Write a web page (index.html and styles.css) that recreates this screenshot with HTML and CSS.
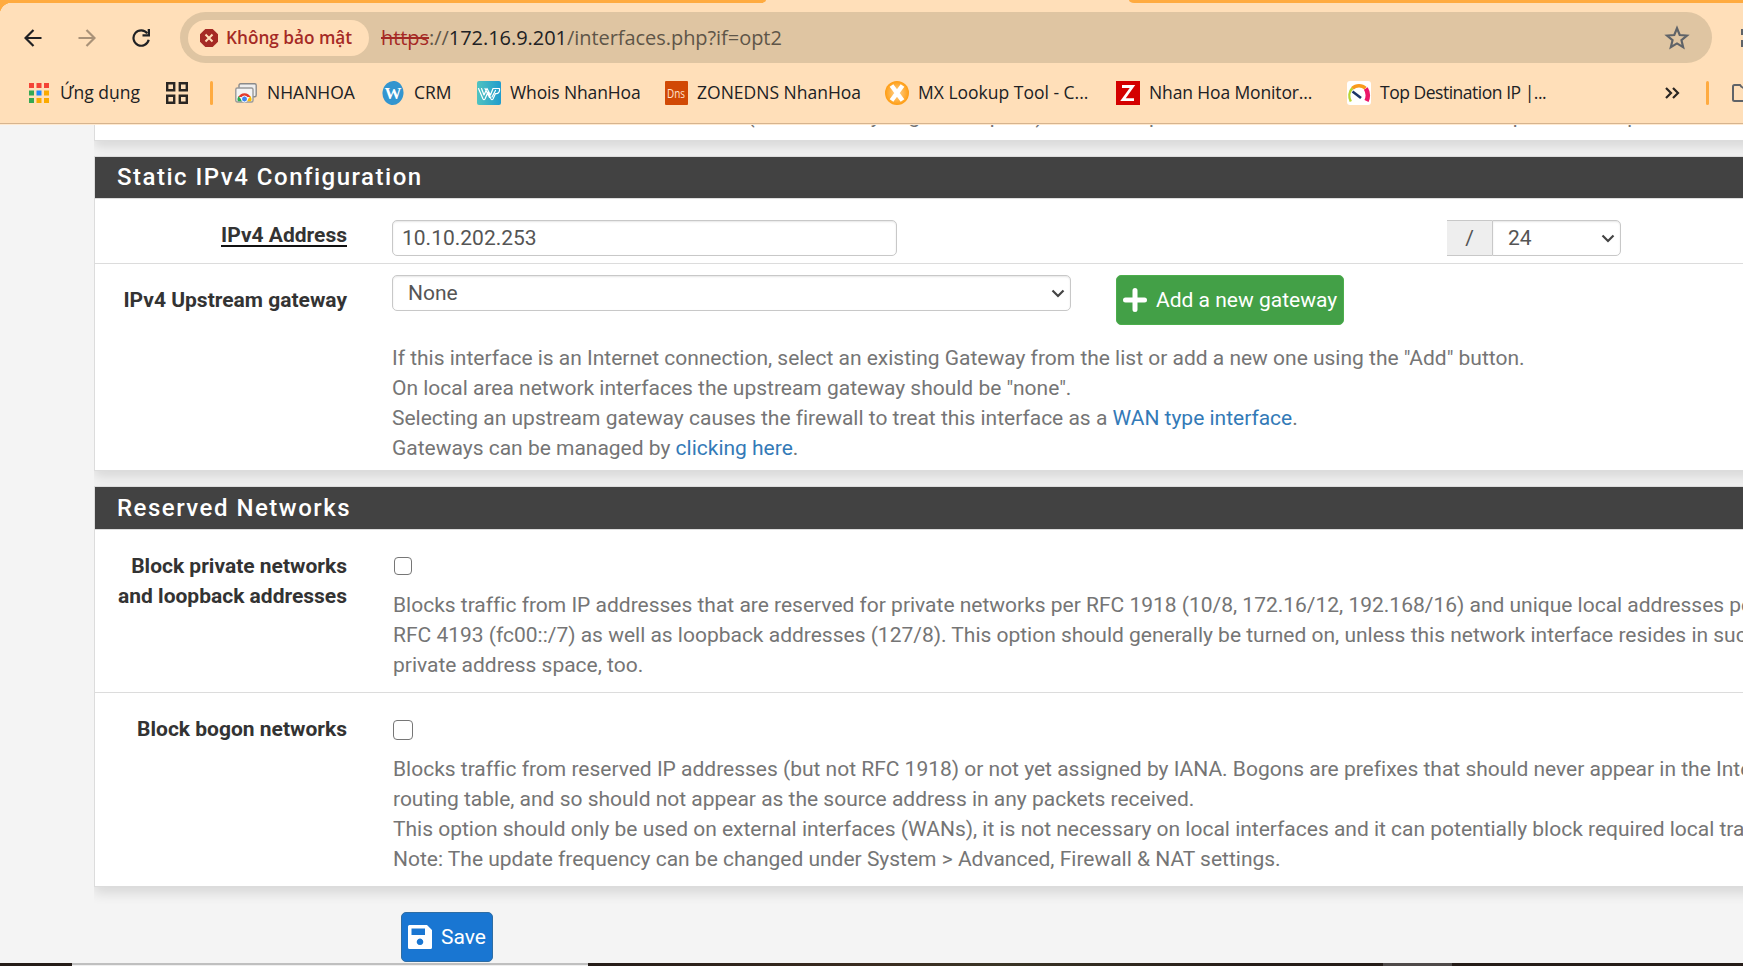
FILE: index.html
```html
<!DOCTYPE html>
<html lang="vi">
<head>
<meta charset="utf-8">
<title>Interfaces</title>
<link rel="stylesheet" href="styles.css">
</head>
<body>
<div class="window">
  <header class="chrome">
    <div class="tabstrip"><span class="tab-bg left"></span><span class="tab-bg right"></span></div>
    <div class="toolbar">
      <svg class="nav back" viewBox="0 0 18 18"><path d="M17.500 9H2M9.500 1L1.500 9l8 8"/></svg>
      <svg class="nav forward" viewBox="0 0 18 18"><path d="M.5 9H16M8.500 1l8 8-8 8"/></svg>
      <svg class="nav reload" viewBox="0 0 18 18"><path d="M15.300 4.300A7.700 7.700 0 1 0 16.700 10.800"/><path class="fill" d="M18 0v7.500h-7.500V5.300h5.200V0z"/></svg>
      <div class="omnibox">
        <div class="chip">
          <svg width="18" height="18" viewBox="0 0 18 18"><path fill="#a52a25" d="M5.300 0h7.400L18 5.300v7.400L12.700 18H5.300L0 12.700V5.300z"/><path stroke="#ffdfb9" stroke-width="2" d="M5.500 5.500l7 7M12.500 5.500l-7 7"/></svg>
          <span class="chip-text">Không bảo mật</span>
        </div>
        <div class="url"><span class="scheme">https</span><span class="slashes">://</span><span class="host">172.16.9.201</span><span class="path">/interfaces.php?if=opt2</span></div>
        <svg class="star" viewBox="0 0 24 24"><path d="M12 3l2.500 6.200 6.700.5-5.100 4.300 1.600 6.500-5.700-3.500-5.700 3.500 1.600-6.500-5.100-4.300 6.700-.5z"/></svg>
      </div>
      <svg class="ext" width="3" height="20" viewBox="0 0 3 20"><path fill="#5f6368" d="M1 1h2v6H1zM1 12h2v7H1z"/></svg>
    </div>
    <nav class="bookmarks">
      <a class="bm apps"><svg width="20" height="20" viewBox="0 0 20 20"><path fill="#f44336" d="M0 0h5v5H0zM7.500 0h5v5h-5zM15 0h5v5h-5z"/><path fill="#34a853" d="M0 7.500h5v5H0zM0 15h5v5H0z"/><path fill="#1e88ff" d="M7.500 7.500h5v5h-5z"/><path fill="#fbaa00" d="M15 7.500h5v5h-5zM7.500 15h5v5h-5zM15 15h5v5h-5z"/></svg><span>Ứng dụng</span></a>
      <svg class="grid-icon" width="22" height="22" viewBox="0 0 22 22"><path fill="none" stroke="#2a2623" stroke-width="2.400" d="M1.200 1.200h7v7h-7zM13.800 1.200h7v7h-7zM1.200 13.800h7v7h-7zM13.800 13.800h7v7h-7z"/></svg>
      <i class="sep"></i>
      <a class="bm nhanhoa"><svg width="22" height="20" viewBox="0 0 22 20"><rect x="4" y=".8" width="17.200" height="13" rx="1.500" fill="#eee" stroke="#8a8a8a" stroke-width="1.400"/><rect x=".8" y="5" width="17.200" height="14" rx="1.500" fill="#f4f4f4" stroke="#999" stroke-width="1.400"/><path fill="#e33b2e" d="M3.400 14A6.800 6.800 0 0 1 15.600 14z"/><path fill="#2da94f" d="M3.400 13a6.800 6.800 0 0 0-.6 5.300h5z"/><path fill="#fdbd00" d="M15.600 13a6.800 6.800 0 0 1 .6 5.300h-5z"/><circle cx="9.500" cy="16" r="3" fill="#3e82f1" stroke="#fff"/></svg><span>NHANHOA</span></a>
      <a class="bm crm"><svg width="22" height="24" viewBox="0 0 22 24"><ellipse cx="11" cy="12" rx="10.500" ry="12" transform="rotate(8 11 12)" fill="#3395cf"/><text x="11" y="18" class="ico-w">W</text></svg><span>CRM</span></a>
      <a class="bm whois"><svg width="24" height="24" viewBox="0 0 24 24"><defs><linearGradient id="wg"><stop offset="0" stop-color="#50c3c0"/><stop offset="1" stop-color="#219ccd"/></linearGradient></defs><rect width="24" height="24" rx="2" fill="url(#wg)"/><path fill="none" stroke="#fff" stroke-width="1.200" stroke-linejoin="round" stroke-linecap="round" d="M1.500 7.500l4.500 10.500q1 1.500 2 0L11 11l3 7q1 1.500 2 0l2.500-5.500c3 .5 4.500-2 4-5h-6.500L13.500 14 10 7.500 7 14 4.500 7.500M8 7.500l4.500 9M18.500 9.500l-3.500 6.500"/></svg><span>Whois NhanHoa</span></a>
      <a class="bm dns"><svg width="23" height="24" viewBox="0 0 23 24"><rect width="23" height="24" rx="1" fill="#d14905"/><text x="2" y="16.500" class="ico-dns" textLength="18" lengthAdjust="spacingAndGlyphs">Dns</text></svg><span>ZONEDNS NhanHoa</span></a>
      <a class="bm mx"><svg width="24" height="24" viewBox="0 0 24 24"><defs><radialGradient id="mg"><stop offset="0" stop-color="#ffd596"/><stop offset="1" stop-color="#ff9d12"/></radialGradient></defs><circle cx="12" cy="12" r="12" fill="url(#mg)"/><path stroke="#fff" stroke-width="4.600" d="M6.500 4.500l11 15M17.500 4.500l-11 15"/></svg><span>MX Lookup Tool - C...</span></a>
      <a class="bm zbx"><svg width="24" height="24" viewBox="0 0 24 24"><rect width="24" height="24" fill="#d40000"/><path fill="none" stroke="#fff" stroke-width="2.800" d="M6 5.500h10.500L7 18.700h11"/></svg><span>Nhan Hoa Monitor...</span></a>
      <a class="bm top"><svg width="24" height="24" viewBox="0 0 24 24"><rect width="24" height="24" rx="3" fill="#fff"/><g fill="none"><path stroke="#b7d433" stroke-width="2.500" d="M3.800 20.500C1.500 16 2 10.500 5.500 7"/><path stroke="#f99b1c" stroke-width="3.500" d="M5.500 7.200C9 3.800 15 3.800 18.500 7.200"/><path stroke="#ec1668" stroke-width="4.500" d="M18.800 7.500c2.200 3.500 2.500 8.500.7 12.500"/><path stroke="#1c3668" stroke-width="2.600" d="M5.500 10.500l8.500 6.500"/></g></svg><span>Top Destination IP |...</span></a>
      <svg class="more" width="15" height="12" viewBox="0 0 15 12"><path fill="none" stroke="#2a2623" stroke-width="2.200" d="M1 1l5 5-5 5M8 1l5 5-5 5"/></svg>
      <i class="sep"></i>
      <svg class="folder" width="20" height="18" viewBox="0 0 20 18"><path fill="none" stroke="#5f6368" stroke-width="2" d="M10 3.500L8 1H2.500Q1 1 1 2.500v13Q1 17 2.500 17H20M10 3.500h10"/></svg>
    </nav>
  </header>

  <main class="page">
    <section class="panel first">
      <div class="row clipped"><p class="help">WARNING: MUST be set to autoselect (automatically negotiate speed) unless the port this interface connects to has its speed and duplex forced.</p></div>
    </section>

    <section class="panel">
      <h2>Static IPv4 Configuration</h2>
      <div class="row address">
        <div class="label"><span class="required">IPv4 Address</span></div>
        <div class="field">
          <div class="control ip">10.10.202.253</div>
          <div class="group"><span class="addon">/</span><div class="control mask"><span>24</span><svg class="caret" viewBox="0 0 14 9"><path d="M1.500 1.500L7 7l5.500-5.500"/></svg></div></div>
        </div>
      </div>
      <div class="row gateway">
        <div class="label">IPv4 Upstream gateway</div>
        <div class="field">
          <div class="controls">
            <div class="control gw"><span>None</span><svg class="caret" viewBox="0 0 14 9"><path d="M1.500 1.500L7 7l5.500-5.500"/></svg></div>
            <div class="btn add"><svg width="24" height="24" viewBox="0 0 24 24"><path stroke="#fff" stroke-width="5" stroke-linecap="round" d="M12 2.500v19M2.500 12h19"/></svg><span>Add a new gateway</span></div>
          </div>
          <p class="help">If this interface is an Internet connection, select an existing Gateway from the list or add a new one using the "Add" button.<br>On local area network interfaces the upstream gateway should be "none".<br>Selecting an upstream gateway causes the firewall to treat this interface as a <a>WAN type interface</a>.<br>Gateways can be managed by <a>clicking here</a>.</p>
        </div>
      </div>
    </section>

    <section class="panel">
      <h2 class="tall">Reserved Networks</h2>
      <div class="row private">
        <div class="label">Block private networks<br>and loopback addresses</div>
        <div class="field">
          <span class="check"></span>
          <p class="help">Blocks traffic from IP addresses that are reserved for private networks per RFC 1918 (10/8, 172.16/12, 192.168/16) and unique local addresses per<br>RFC 4193 (fc00::/7) as well as loopback addresses (127/8). This option should generally be turned on, unless this network interface resides in such a<br>private address space, too.</p>
        </div>
      </div>
      <div class="row bogon">
        <div class="label">Block bogon networks</div>
        <div class="field">
          <span class="check"></span>
          <p class="help">Blocks traffic from reserved IP addresses (but not RFC 1918) or not yet assigned by IANA. Bogons are prefixes that should never appear in the Internet<br>routing table, and so should not appear as the source address in any packets received.<br>This option should only be used on external interfaces (WANs), it is not necessary on local interfaces and it can potentially block required local traffic.<br>Note: The update frequency can be changed under System &gt; Advanced, Firewall &amp; NAT settings.</p>
        </div>
      </div>
    </section>

    <div class="btn save"><svg width="24" height="24" viewBox="0 0 24 24"><path fill="#fff" fill-rule="evenodd" d="M1.500 0H19l5 5v17.500q0 1.500-1.500 1.500h-21Q0 24 0 22.500v-21Q0 0 1.500 0zM3.500 3.500V10H17V3.500zM12 13.500a3.300 3.300 0 1 0 .01 0z"/></svg><span>Save</span></div>
  </main>

  <footer class="taskbar"><span class="search"></span><span class="active"></span></footer>
</div>
</body>
</html>
```

FILE: styles.css
```css
* { box-sizing: border-box; }
body { margin: 0; }
svg { display: block; flex: none; }

.window {
  display: flex;
  flex-direction: column;
  width: 1743px;
  height: 966px;
  overflow: hidden;
  background: #f4f4f4;
  font: 21px/30px Roboto, sans-serif;
}

/* Browser chrome */
.chrome {
  flex: none;
  height: 125px;
  background: radial-gradient(circle at 12px 15px, #ffdfb9 12px, #ffab40 12.500px) 0 0 / 12px 15px no-repeat #ffdfb9;
  border-bottom: 1px solid #ffe9cf;
  box-shadow: inset 0 -1px #d6b48f;
  font-family: "Open Sans", "Noto Sans", sans-serif;
  color: #202124;
}
.tabstrip { display: flex; justify-content: space-between; height: 3px; }
.tab-bg { background: #ffab40; }
.tab-bg.left { width: 766px; border-bottom-right-radius: 5px 3px; }
.tab-bg.right { width: 614px; border-bottom-left-radius: 5px 3px; }

.toolbar { display: flex; align-items: center; height: 69px; padding-left: 24px; }
.nav { width: 18px; height: 18px; fill: none; stroke: #202124; stroke-width: 2.200; margin-top: 1px; }
.nav .fill { fill: #202124; stroke: none; }
.forward { margin-left: 36px; stroke: #a99278; }
.reload { margin-left: 36px; }
.omnibox {
  display: flex;
  align-items: center;
  width: 1533px;
  height: 51px;
  margin-left: 30px;
  padding-left: 8px;
  border-radius: 26px;
  background: #dfc5a2;
}
.chip {
  display: flex;
  align-items: center;
  width: 181px;
  height: 36px;
  padding-left: 12px;
  gap: 8px;
  border-radius: 18px;
  background: #ffdfb9;
}
.chip-text { color: #a52a25; font-size: 17.200px; font-weight: 600; white-space: nowrap; }
.url { display: flex; width: 1283px; margin-left: 12px; font-size: 20px; letter-spacing: -.05px; white-space: nowrap; }
.scheme { color: #a52a25; text-decoration: line-through; }
.slashes, .path { color: #5e5548; }
.star { width: 26px; height: 26px; fill: none; stroke: #5f6368; stroke-width: 2; }
.ext { margin-left: 28px; }

.bookmarks { display: flex; align-items: center; height: 42px; padding-left: 29px; font-size: 17.500px; }
.bm { display: flex; align-items: center; gap: 9px; flex: none; white-space: nowrap; }
.bm span { margin-top: -2px; }
.apps { width: 137px; gap: 11px; }
.sep { flex: none; width: 3px; height: 24px; margin-left: 22px; border-radius: 2px; background: #ffab40; }
.nhanhoa { width: 147px; margin-left: 22px; gap: 10px; }
.crm { width: 95px; gap: 10px; }
.whois { width: 188px; letter-spacing: -.13px; }
.dns { width: 220px; }
.mx { width: 231px; }
.zbx { width: 231px; letter-spacing: -.13px; }
.top { width: 318px; letter-spacing: -.48px; }
.more + .sep { margin-left: 26px; }
.folder { margin-left: 23px; }
.ico-w { font: bold 17px "Liberation Serif", serif; fill: #fff; text-anchor: middle; }
.ico-dns { font: 13px "Open Sans", sans-serif; fill: #ffe2cf; }

/* Page */
.page { flex: 1; margin-left: 94px; overflow: hidden; }
.panel {
  display: flow-root;
  width: 1700px;
  margin-bottom: 15px;
  border: 1px solid #dcdcdc;
  background: #fff;
  box-shadow: 0 6px 12px rgba(0, 0, 0, .12);
}
.first { height: 16px; border-top: 0; }
.clipped { margin-top: -24px; padding-left: 297px; }
h2 {
  height: 42px;
  margin: 0;
  padding-left: 22px;
  border-bottom: 1px solid #dcdcdc;
  background: #424242;
  color: #fff;
  font-size: 24px;
  font-weight: 500;
  line-height: 40px;
  letter-spacing: 1.500px;
}
h2.tall { height: 43px; line-height: 42px; }
.row { display: flex; white-space: nowrap; }
.row + .row { border-top: 1px solid #dcdcdc; }
.label { width: 252px; flex: none; text-align: right; font-weight: 700; color: #333; }
.field { margin-left: 45px; }
.required { border-bottom: 2px solid #111; display: inline-block; height: 27px; }
.control {
  display: flex;
  align-items: center;
  justify-content: space-between;
  height: 36px;
  border: 1px solid #c8c8c8;
  border-radius: 5px;
  box-shadow: inset 0 1px 2px rgba(0, 0, 0, .1);
  color: #555;
}
.caret { width: 14px; height: 9px; fill: none; stroke: #444; stroke-width: 2.200; }
.help { margin: 0; color: #757575; letter-spacing: -.008px; }
.help a { color: #337ab7; }

.address { height: 64px; }
.address .label { padding-top: 21px; }
.address .field { display: flex; padding-top: 21px; }
.ip { width: 505px; padding-left: 9px; }
.group { display: flex; margin-left: 550px; }
.addon {
  width: 45px;
  height: 36px;
  border: solid #c8c8c8;
  border-width: 1px 0;
  background: #eee;
  color: #555;
  text-align: center;
  line-height: 34px;
}
.mask { width: 129px; padding: 0 5px 0 15px; border-radius: 0 5px 5px 0; }

.gateway { height: 207px; }
.gateway .label { padding-top: 21px; }
.gateway .field { padding-top: 11px; }
.controls { display: flex; gap: 45px; margin-bottom: 18px; }
.gw { width: 679px; padding: 0 5px 0 15px; }
.btn { display: flex; align-items: center; height: 50px; border-radius: 5px; color: #fff; white-space: nowrap; }
.add { width: 228px; padding-left: 6px; gap: 9px; background: #43a047; border: 1px solid #4cae4c; }

.private { height: 162px; }
.private .label { padding-top: 21px; }
.private .field { padding-top: 27px; }
.bogon { height: 194px; }
.bogon .label { padding-top: 21px; }
.bogon .field { padding-top: 27px; }
.check { display: block; width: 18px; height: 18px; margin-left: 2px; border: 1.500px solid #767676; border-radius: 4px; }
.check + .help { margin: 15px 0 0 1px; }
.bogon .check { width: 20px; height: 20px; margin-left: 1px; }
.bogon .help { margin-top: 14px; }

.save { width: 92px; margin: 25px 0 0 307px; padding-left: 6px; gap: 9px; background: #1976d2; border: 1px solid #2e6da4; }

.taskbar { display: flex; flex: none; height: 3px; background: linear-gradient(90deg, #251c18 0, #251c18 588px, #3a2c20 871px, #3a3526 1000px, #251c18 1250px, #251c18); }
.search { width: 516px; margin-left: 72px; border-top: 2px solid #bfbfbf; background: #efefef; }
.active { width: 69px; margin-left: 795px; background: #4f4a49; }
```
